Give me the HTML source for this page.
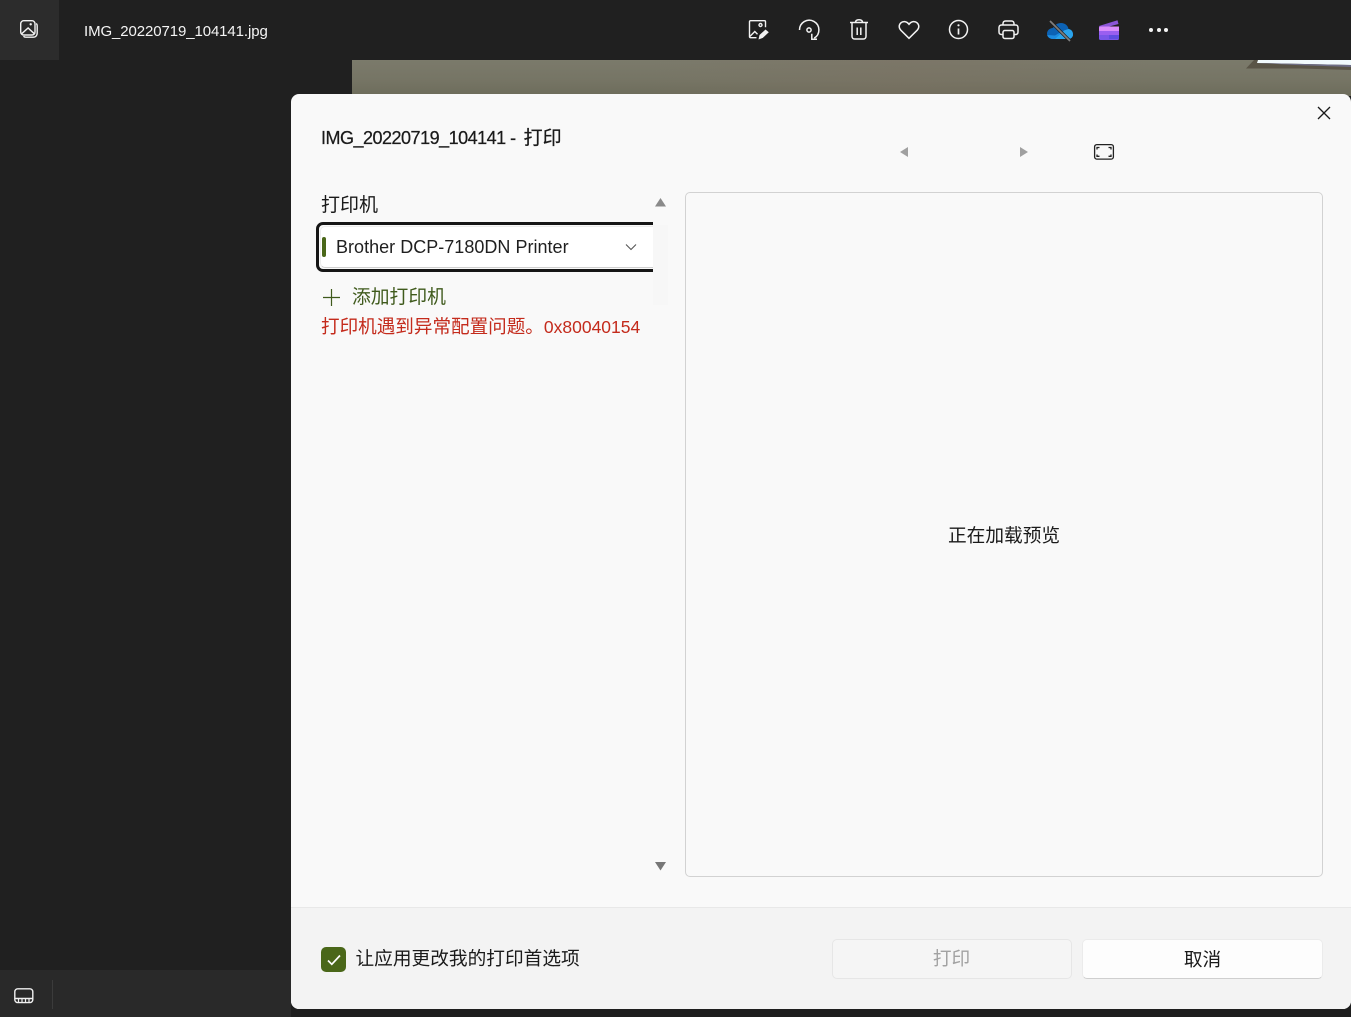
<!DOCTYPE html>
<html lang="zh">
<head>
<meta charset="utf-8">
<title>IMG_20220719_104141 - 打印</title>
<style>
html,body{margin:0;padding:0;width:1351px;height:1017px;overflow:hidden;background:#202020;}
body{position:relative;font-family:"Liberation Sans","Noto Sans CJK SC",sans-serif;}
.a{position:absolute;white-space:nowrap;}
svg{position:absolute;overflow:visible;}
.t{font-family:"Liberation Sans","Noto Sans CJK SC",sans-serif;line-height:24px;height:24px;}
</style>
</head>
<body>
<!-- top-left tab -->
<div class="a" style="left:0;top:0;width:59px;height:60px;background:#2c2c2c"></div>
<svg style="left:18px;top:18px" width="22" height="22" viewBox="0 0 22 22" fill="none" stroke="#f2f2f2" stroke-width="1.4">
<rect x="2.7" y="2.700" width="14.300" height="14.300" rx="3"/>
<path d="M18.200 5.500c.7.500 1 1.200 1 2.200v7.600c0 2.200-1.700 3.900-3.900 3.900H7.700c-1 0-1.700-.3-2.200-1"/>
<circle cx="12.700" cy="6.300" r="1.200" fill="#f2f2f2" stroke="none"/>
<path d="M3.200 16.200l6.900-6.200 6.700 6.200"/>
</svg>
<div class="a t" style="left:84px;top:20px;font-size:15px;color:#f5f5f5;letter-spacing:-.1px">IMG_20220719_104141.jpg</div>

<!-- toolbar icons -->
<svg style="left:748px;top:19px" width="22" height="22" viewBox="0 0 22 22" fill="none" stroke="#f2f2f2" stroke-width="1.4">
<path d="M8.500 18.700H2.500a1 1 0 0 1-1-1V2.700a1 1 0 0 1 1-1h14a1 1 0 0 1 1 1v5.500"/>
<path d="M1.800 17.500l5-5 2.700 2.700"/>
<circle cx="12.500" cy="6" r="1.500"/>
<path d="M10.500 20.500l1-4.500 6-5.500 3.300 2.700-6 5.700z" fill="#f2f2f2" stroke="none"/>
</svg>
<svg style="left:798px;top:19px" width="22" height="23" viewBox="0 0 22 23" fill="none" stroke="#f2f2f2" stroke-width="1.5">
<path d="M1.500 11A9.700 9.700 0 1 1 16.200 19.200"/>
<circle cx="11" cy="11" r="2.100"/>
<path d="M13.800 14.800v5.500h5.200"/>
</svg>
<svg style="left:849px;top:19px" width="20" height="22" viewBox="0 0 20 22" fill="none" stroke="#f2f2f2" stroke-width="1.500">
<path d="M1 3.500h18M6.500 3.500c0-1.700 1-2.700 3.500-2.700s3.500 1 3.500 2.700"/>
<path d="M3 3.500v13.700c0 1.700 1 2.800 2.600 2.800h8.800c1.600 0 2.600-1.100 2.600-2.800V3.500"/>
<path d="M8.200 8.500v7.500M11.800 8.500v7.500"/>
</svg>
<svg style="left:898px;top:20px" width="22" height="20" viewBox="0 0 22 20" fill="none" stroke="#f2f2f2" stroke-width="1.500">
<path d="M11 18.300L2.800 10.200C.6 8 .8 4.800 2.800 2.900 5 .9 8.500 1 11 4.300 13.500 1 17 .9 19.200 2.900c2 1.900 2.200 5.100 0 7.300z"/>
</svg>
<svg style="left:948px;top:19px" width="21" height="21" viewBox="0 0 21 21" fill="none" stroke="#f2f2f2" stroke-width="1.500">
<circle cx="10.500" cy="10.500" r="9"/>
<path d="M10.500 9.500v6" stroke-width="1.700"/>
<circle cx="10.500" cy="6.300" r="1.100" fill="#f2f2f2" stroke="none"/>
</svg>
<svg style="left:998px;top:20px" width="21" height="20" viewBox="0 0 21 20" fill="none" stroke="#f2f2f2" stroke-width="1.500">
<path d="M5 5V3.500C5 2 6 1 7.500 1h6C15 1 16 2 16 3.500V5"/>
<path d="M5 14.500H3.500C2 14.500 1 13.500 1 12V7.500C1 6 2 5 3.500 5h14C19 5 20 6 20 7.500V12c0 1.500-1 2.500-2.500 2.500H16"/>
<rect x="5" y="10.500" width="11" height="8" rx="1.800"/>
</svg>
<!-- OneDrive -->
<svg style="left:1046px;top:20px" width="28" height="22" viewBox="0 0 28 22">
<path d="M7 19C3.500 19 1 16.700 1 13.700 1 10.500 3.700 8 7 8 8.500 5 11.500 3 15 3c4 0 7 2.500 7.500 6 2.700.5 4.500 2.500 4.500 5.200C27 17 25 19 22 19z" fill="#0c62b4"/>
<path d="M1.200 15c.8 2.500 3 4 5.800 4h15c2.500 0 4.500-1.500 5-3.700L20 11.500 14 12.500 9 15.500z" fill="#1c8be0"/>
<path d="M9 19l6-5.500 3-3 4.500-1.500c2.700.5 4.500 2.500 4.500 5.200C27 17 25 19 22 19z" fill="#2aa4ec"/>
<path d="M4 1L24 21" stroke="#202020" stroke-width="3.200"/>
<path d="M4 1L24 21" stroke="#808080" stroke-width="1.700"/>
</svg>
<!-- Clipchamp -->
<svg style="left:1098px;top:20px" width="22" height="21" viewBox="0 0 22 21">
<path d="M1 6L19.500 .3l1 3.700L2 9z" fill="#8b55d8"/>
<rect x="1" y="6.500" width="20" height="13.500" rx="1.500" fill="#7a56e8"/>
<path d="M2.500 6.500H21V11H1V8c0-1 .5-1.500 1.500-1.500z" fill="#da8dfb"/>
<rect x="1" y="11" width="20" height="4" fill="#9a5ff0"/>
<rect x="11" y="15" width="10" height="4" fill="#5f4de0"/>
</svg>
<div class="a" style="left:1149px;top:28px;width:4px;height:4px;border-radius:50%;background:#f4f4f4"></div>
<div class="a" style="left:1156.500px;top:28px;width:4px;height:4px;border-radius:50%;background:#f4f4f4"></div>
<div class="a" style="left:1164px;top:28px;width:4px;height:4px;border-radius:50%;background:#f4f4f4"></div>

<!-- photo behind dialog -->
<div class="a" style="left:352px;top:60px;width:999px;height:36px;background:linear-gradient(180deg,#7b7a6b 0%,#767565 55%,#6d6c5b 100%)"></div>
<div class="a" style="left:352px;top:60px;width:999px;height:36px;background:linear-gradient(90deg,rgba(125,115,100,0) 30%,rgba(125,112,98,.35) 55%,rgba(125,115,100,0) 80%)"></div>
<svg style="left:1240px;top:60px" width="111" height="12" viewBox="0 0 111 12">
<path d="M6 8.500L14 0h97v10L60 8.500z" fill="#5a5547"/>
<path d="M18 0h93v5L17 3z" fill="#f2fbfd"/>
<path d="M17 3l94 2v2L55 5z" fill="#6e6e86"/>
</svg>

<!-- bottom bar -->
<div class="a" style="left:0;top:970px;width:291px;height:47px;background:#292929"></div>
<svg style="left:14px;top:988px" width="20" height="16" viewBox="0 0 20 16" fill="none" stroke="#f0f0f0" stroke-width="1.400">
<rect x=".8" y=".8" width="18" height="13.800" rx="3"/>
<path d="M.8 10.500h18"/>
<path d="M4.500 10.500v4M8 10.500v4M11.500 10.500v4M15 10.500v4" stroke-width="1.200"/>
</svg>
<div class="a" style="left:52px;top:980px;width:1px;height:29px;background:#3b3b3b"></div>

<!-- dialog -->
<div class="a" style="left:0;top:1009px;width:291px;height:8px;background:#292929"></div>
<div class="a" style="left:291px;top:1000px;width:1060px;height:17px;background:#1e1e1e"></div>
<div class="a" style="left:291px;top:94px;width:1060px;height:915px;background:#f9f9f9;border-radius:8px;overflow:hidden">
  <div class="a" style="left:0;top:813px;width:1060px;height:102px;background:#f3f3f3;border-top:1px solid #e8e8e8;box-sizing:border-box"></div>
</div>

<div class="a t" style="left:321px;top:126px;font-size:18px;color:#1a1a1a;-webkit-text-stroke:.25px #1a1a1a;letter-spacing:-.5px">IMG_20220719_104141 - <span style="font-size:19px;letter-spacing:0;margin-left:3.500px">打印</span></div>

<!-- close -->
<svg style="left:1317px;top:106px" width="14" height="14" viewBox="0 0 14 14" stroke="#1a1a1a" stroke-width="1.300"><path d="M1 1l12 12M13 1L1 13"/></svg>

<!-- pager -->
<svg style="left:899px;top:147px" width="10" height="11" viewBox="0 0 10 11"><path d="M9 0v10L1 5z" fill="#a0a0a0"/></svg>
<svg style="left:1020px;top:147px" width="10" height="11" viewBox="0 0 10 11"><path d="M0 0v10l8-5z" fill="#a0a0a0"/></svg>
<svg style="left:1094px;top:144px" width="20" height="16" viewBox="0 0 20 16" fill="none" stroke="#222" stroke-width="1.300">
<rect x=".6" y=".6" width="18.800" height="14.500" rx="2.200"/>
<path d="M3 5.500V3.500h2.500M14.500 3.500H17V5.500M3 10.500v1.800h2.500M17 10.500v1.800h-2.500" stroke-width="1.300"/>
</svg>

<!-- left panel -->
<div class="a t" style="left:321px;top:194px;font-size:19px;color:#1a1a1a">打印机</div>
<div class="a" style="left:316px;top:222px;width:337px;height:50px;overflow:hidden">
  <div class="a" style="left:0;top:0;width:360px;height:50px;box-sizing:border-box;border:3px solid #161616;border-radius:7px;background:#f9f9f9"></div>
  <div class="a" style="left:4px;top:4px;width:360px;height:42px;box-sizing:border-box;background:#fff;border:1px solid #ececec;border-bottom:1px solid #cfcfcf;border-radius:5px"></div>
  <div class="a" style="left:6px;top:15px;width:4px;height:20px;background:#4a6719;border-radius:2px"></div>
</div>
<div class="a t" style="left:336px;top:235px;font-size:18px;color:#1f1f1f;letter-spacing:.02px">Brother DCP-7180DN Printer</div>
<svg style="left:625px;top:243px" width="12" height="8" viewBox="0 0 12 8" fill="none" stroke="#555" stroke-width="1.100"><path d="M1 1.500l5 5 5-5"/></svg>

<svg style="left:323px;top:289px" width="17" height="17" viewBox="0 0 17 17" stroke="#3f5a1c" stroke-width="1.200"><path d="M8.500 0v17M0 8.500h17"/></svg>
<div class="a t" style="left:352px;top:285px;font-size:18.800px;color:#3f5a1c">添加打印机</div>
<div class="a t" style="left:321px;top:315px;font-size:18.600px;color:#c42b1c;letter-spacing:-.02px">打印机遇到异常配置问题。<span style="font-size:17.500px;letter-spacing:0">0x80040154</span></div>

<!-- scrollbar -->
<div class="a" style="left:653px;top:225px;width:15px;height:80px;background:#f7f7f7"></div>
<svg style="left:655px;top:198px" width="11" height="9" viewBox="0 0 11 9"><path d="M5.500 0L11 8.500H0z" fill="#8a8a8a"/></svg>
<svg style="left:655px;top:862px" width="11" height="9" viewBox="0 0 11 9"><path d="M5.500 8.500L11 0H0z" fill="#777"/></svg>

<!-- preview -->
<div class="a" style="left:685px;top:192px;width:638px;height:685px;box-sizing:border-box;border:1px solid #d2d2d2;border-radius:5px;background:#f9f9f9"></div>
<div class="a t" style="left:948px;top:524px;font-size:18.700px;color:#1a1a1a">正在加载预览</div>

<!-- footer -->
<div class="a" style="left:321px;top:947px;width:25px;height:25px;background:#4a6719;border-radius:5px"></div>
<svg style="left:327px;top:954px" width="14" height="12" viewBox="0 0 14 12" fill="none" stroke="#fff" stroke-width="1.700"><path d="M1 6.500l3.800 3.800L13 1.500"/></svg>
<div class="a t" style="left:355.500px;top:947px;font-size:18.700px;color:#1a1a1a">让应用更改我的打印首选项</div>

<div class="a" style="left:832px;top:939px;width:240px;height:40px;box-sizing:border-box;background:#f5f5f5;border:1px solid #e6e6e6;border-radius:5px"></div>
<div class="a t" style="left:831.500px;top:947px;width:240px;text-align:center;font-size:18.700px;color:#a2a2a2">打印</div>
<div class="a" style="left:1082px;top:939px;width:241px;height:40px;box-sizing:border-box;background:#fdfdfd;border:1px solid #ebebeb;border-bottom-color:#cfcfcf;border-radius:5px"></div>
<div class="a t" style="left:1082px;top:948px;width:241px;text-align:center;font-size:18.700px;color:#1a1a1a">取消</div>
</body>
</html>
